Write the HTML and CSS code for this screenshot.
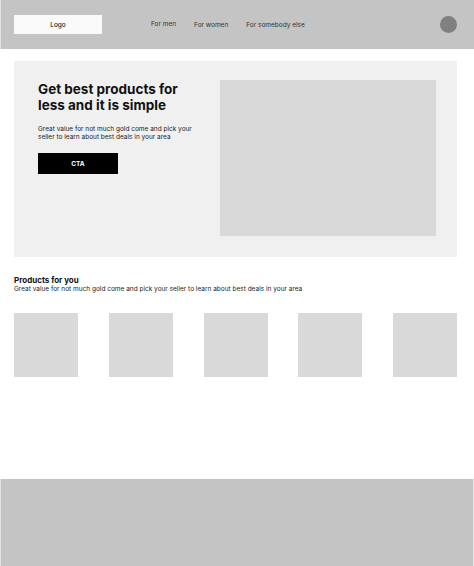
FILE: index.html
```html
<!DOCTYPE html>
<html lang="en">
<head>
<meta charset="utf-8">
<title>Shop</title>
<link rel="stylesheet" href="styles.css">
</head>
<body>
<header class="topbar">
  <div class="logo">Logo</div>
  <nav class="nav">
    <a class="nav-link nav-link-first" href="#">For men</a>
    <a class="nav-link" href="#">For women</a>
    <a class="nav-link" href="#">For somebody else</a>
  </nav>
  <div class="avatar"></div>
</header>
<main class="main">
  <section class="hero">
    <div class="hero-text">
      <h1 class="hero-title">Get best products for less and it is simple</h1>
      <p class="hero-desc">Great value for not much gold come and pick your seller to learn about best deals in your area</p>
      <button class="cta">CTA</button>
    </div>
    <div class="hero-image"></div>
  </section>
  <section class="products">
    <h2 class="products-title">Products for you</h2>
    <p class="products-desc">Great value for not much gold come and pick your seller to learn about best deals in your area</p>
    <div class="product-row">
      <div class="product"></div>
      <div class="product"></div>
      <div class="product"></div>
      <div class="product"></div>
      <div class="product"></div>
    </div>
  </section>
</main>
<footer class="footer"></footer>
</body>
</html>
```
FILE: styles.css
```css
* { box-sizing: border-box; }
html, body { margin: 0; padding: 0; }
body {
  font-family: Inter, "Liberation Sans", sans-serif;
  background: #ffffff;
  color: #000;
  width: 474px;
  height: 566px;
  overflow: hidden;
}
.topbar {
  height: 49px;
  background: #c4c4c4;
  display: flex;
  align-items: center;
  padding: 0 17px 0 14px;
  border-left: 1px solid #e4e4e4;
}
.logo {
  width: 88px;
  height: 19px;
  margin-left: -1px;
  background: #fafafa;
  display: flex;
  align-items: center;
  justify-content: center;
  font-size: 6.5px;
  font-weight: 500;
  color: #222;
}
.nav {
  display: flex;
  align-items: center;
  gap: 18px;
  margin-left: 49px;
  padding-top: 1px;
}
.nav-link {
  font-size: 6.5px;
  color: #333;
  text-decoration: none;
  line-height: 9px;
}
.nav-link-first { margin-bottom: 1px; }
.avatar {
  margin-left: auto;
  width: 17px;
  height: 17px;
  border-radius: 50%;
  background: #808080;
}
.main {
  padding: 12px 17px 0 14px;
}
.hero {
  height: 196px;
  background: #f0f0f0;
  display: flex;
  justify-content: space-between;
  padding: 19px 21px 21px 24px;
}
.hero-text {
  width: 170px;
  padding-top: 1px;
}
.hero-title {
  margin: 0;
  width: 150px;
  font-size: 13.5px;
  line-height: 16px;
  font-weight: 700;
  color: #111;
}
.hero-desc {
  margin: 12px 0 0;
  font-size: 6.5px;
  line-height: 8px;
  color: #222;
}
.cta {
  margin-top: 12px;
  width: 80px;
  height: 21px;
  border: 0;
  background: #000;
  color: #fff;
  font-family: inherit;
  font-size: 6.5px;
  font-weight: 700;
  padding: 0;
  display: block;
}
.hero-image {
  width: 216px;
  height: 156px;
  background: #d9d9d9;
}
.products {
  padding-top: 19px;
}
.products-title {
  margin: 0;
  font-size: 8px;
  line-height: 9px;
  font-weight: 700;
  color: #111;
}
.products-desc {
  margin: 0;
  font-size: 6.5px;
  line-height: 9px;
  color: #222;
}
.product-row {
  display: flex;
  justify-content: space-between;
  margin-top: 19px;
}
.product {
  width: 64px;
  height: 64px;
  background: #d9d9d9;
}
.footer {
  margin-top: 102px;
  height: 87px;
  background: #c4c4c4;
  border-left: 1px solid #e4e4e4;
  border-right: 1px solid #e4e4e4;
}
```
